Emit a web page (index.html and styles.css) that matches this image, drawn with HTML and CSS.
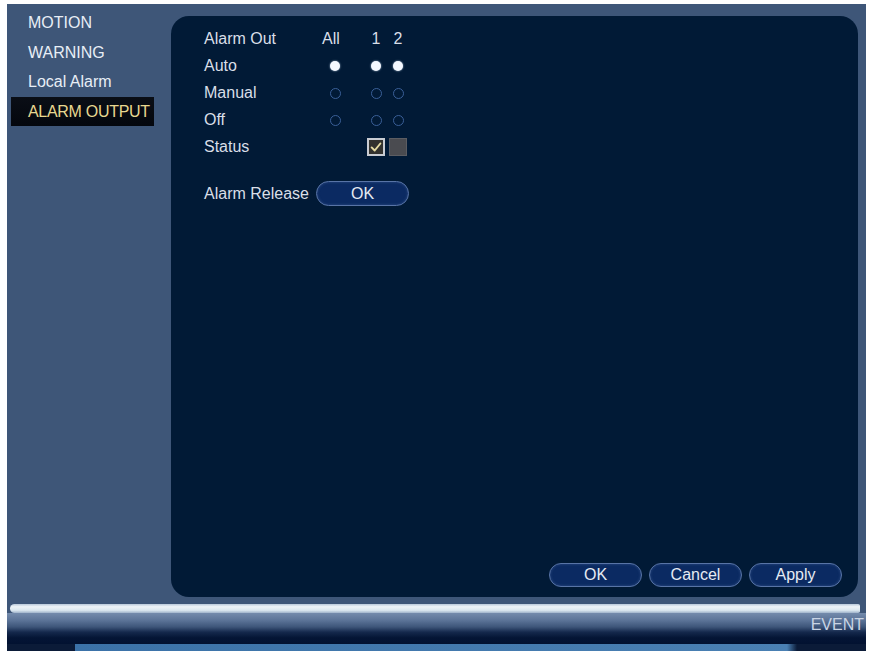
FILE: index.html
```html
<!DOCTYPE html>
<html lang="en">
<head>
<meta charset="utf-8">
<title>Alarm Output</title>
<link rel="stylesheet" href="styles.css">
</head>
<body>
<div class="screen">
  <div class="main">
    <nav class="sidebar">
      <div class="nav-item">MOTION</div>
      <div class="nav-item">WARNING</div>
      <div class="nav-item">Local Alarm</div>
      <div class="nav-item active">ALARM OUTPUT</div>
    </nav>
    <section class="panel">
      <div class="grid">
        <div class="lbl">Alarm Out</div>
        <div class="cell-all head">All</div>
        <div class="gapcell"></div>
        <div class="cell head">1</div>
        <div class="cell head">2</div>

        <div class="lbl">Auto</div>
        <div class="cell-all"><span class="radio on"></span></div>
        <div class="gapcell"></div>
        <div class="cell"><span class="radio on"></span></div>
        <div class="cell"><span class="radio on"></span></div>

        <div class="lbl">Manual</div>
        <div class="cell-all"><span class="radio off"></span></div>
        <div class="gapcell"></div>
        <div class="cell"><span class="radio off"></span></div>
        <div class="cell"><span class="radio off"></span></div>

        <div class="lbl">Off</div>
        <div class="cell-all"><span class="radio off"></span></div>
        <div class="gapcell"></div>
        <div class="cell"><span class="radio off"></span></div>
        <div class="cell"><span class="radio off"></span></div>

        <div class="lbl">Status</div>
        <div class="cell-all"></div>
        <div class="gapcell"></div>
        <div class="cell"><span class="box checked"><svg viewBox="0 0 16 16" width="14" height="14"><polyline points="3,8.5 6.5,12 13,4" fill="none" stroke="#e6dca2" stroke-width="2.2" stroke-linecap="round" stroke-linejoin="round"/></svg></span></div>
        <div class="cell"><span class="box"></span></div>
      </div>
      <div class="release">
        <div class="release-lbl">Alarm Release</div>
        <button class="btn small">OK</button>
      </div>
      <div class="footer">
        <button class="btn">OK</button>
        <button class="btn">Cancel</button>
        <button class="btn">Apply</button>
      </div>
    </section>
  </div>
  <div class="bar">
    <div class="shine"></div>
    <div class="eventrow">EVENT</div>
    <div class="strip"></div>
  </div>
</div>
</body>
</html>
```
FILE: styles.css
```css
html, body {
  margin: 0;
  padding: 0;
  background: #ffffff;
}
body {
  font-family: "Liberation Sans", Arial, sans-serif;
  width: 870px;
  height: 651px;
  overflow: hidden;
}
.screen {
  margin: 4px 4px 0 7px;
  height: 647px;
  background: #3e5678;
  display: flex;
  flex-direction: column;
}
.main {
  height: 599px;
  display: flex;
}
.sidebar {
  width: 164px;
  padding-top: 4px;
  flex: none;
}
.nav-item {
  height: 29.5px;
  line-height: 29.5px;
  margin-left: 4px;
  width: 143px;
  box-sizing: border-box;
  padding-left: 17px;
  color: #e8eef6;
  font-size: 16px;
  white-space: nowrap;
}
.nav-item.active {
  background: linear-gradient(#0a0e16, #04070d);
  color: #e8d890;
  font-size: 16px;
  letter-spacing: -0.3px;
}
.panel {
  flex: 1;
  margin: 12px 8px 6px 0;
  background: #011a36;
  border-radius: 18px;
  display: flex;
  flex-direction: column;
  padding: 9.5px 0 0 33px;
  color: #d9dfe8;
  font-size: 16px;
}
.grid {
  display: grid;
  grid-template-columns: 118px 26px 17px 22px 22px;
  grid-auto-rows: 27px;
  align-items: center;
}
.lbl {
  white-space: nowrap;
}
.cell-all {
  display: flex;
  align-items: center;
  justify-content: center;
}
.cell-all.head {
  justify-content: flex-start;
}
.cell {
  display: flex;
  align-items: center;
  justify-content: center;
}
.radio {
  display: block;
  box-sizing: border-box;
  border-radius: 50%;
}
.radio.on {
  width: 10px;
  height: 10px;
  background: #f4f8ff;
  box-shadow: 0 0 2px rgba(220, 235, 255, 0.8);
}
.radio.off {
  width: 11px;
  height: 11px;
  border: 1.5px solid #3a5f98;
}
.box {
  width: 18px;
  height: 18px;
  box-sizing: border-box;
  display: flex;
  align-items: center;
  justify-content: center;
  background: #4a4b50;
  border: 1px solid #5c5d62;
}
.box.checked {
  background: #33322e;
  border: 2px solid #c9ccd2;
}
.release {
  margin-top: 20px;
  height: 26px;
  display: flex;
  align-items: center;
}
.release-lbl {
  width: 112px;
  white-space: nowrap;
}
.btn {
  font-family: "Liberation Sans", Arial, sans-serif;
  font-size: 16px;
  color: #e6ebf3;
  background: #0b2a62;
  border: 1.5px solid #5874a6;
  border-radius: 13px;
  width: 93px;
  height: 24px;
  padding: 0;
  line-height: 20px;
  box-shadow: inset 0 0 3px rgba(120, 150, 200, 0.35);
}
.btn.small {
  height: 25px;
}
.footer {
  margin-top: auto;
  display: flex;
  justify-content: flex-end;
  gap: 7px;
  padding: 0 16px 10px 0;
}
.bar {
  height: 48px;
  display: flex;
  flex-direction: column;
  background: #3e5678;
}
.shine {
  height: 9px;
  margin: 1px 6px 0 3px;
  border-radius: 5px 2px 2px 5px;
  background: linear-gradient(#b8c8da, #eef4f8 30%, #dbe7ef 70%, #9fb3cb);
}
.eventrow {
  height: 31px;
  line-height: 24px;
  text-align: right;
  padding-right: 2px;
  color: #c9d4e4;
  font-size: 16px;
  background: linear-gradient(#748bac 0, #5a7296 25%, #3d5579 45%, #14284c 62%, #041535 80%, #021231 100%);
}
.strip {
  height: 7px;
  background: linear-gradient(to right, #0b1b38 0, #0b1b38 68px, #3b72a8 68px, #4a80b3 780px, #0b1b38 790px, #0b1b38 100%);
}
```
